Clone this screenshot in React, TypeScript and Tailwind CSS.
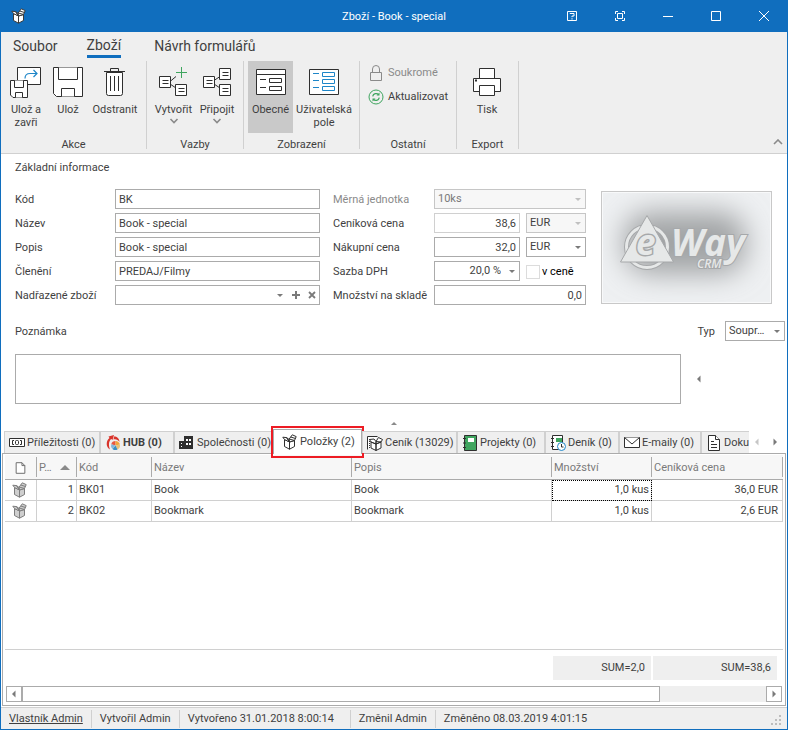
import { ReactNode, useState } from "react";
import clsx from "clsx";

const INK = "#2f2f2f";
const GREEN = "#3fa55f";
const BLUE = "#1e86c8";

/* ---------- icons ---------- */

interface BoxProps {
    stroke: string,
    fill: string,
    size?: number
}

function BoxIcon({stroke, fill, size = 16}: BoxProps) {
    return (
        <svg width={size} height={size} viewBox="0 0 16 16" fill={fill} stroke={stroke} strokeWidth="1" strokeLinejoin="round" className="shrink-0">
            <path d="M2.500 5.500 7.500 8v7.200l-5-2.700z"/>
            <path d="M12.500 6.500 7.500 8v7.200l5-2.700z"/>
            <path d="M2.500 5.500.8 3.200 4.600 3.600 7.500 8z"/>
            <path d="M4.600 3.600 7 5.400 7.500 8z"/>
            <path d="M7.200 5 10.300.8l3.900 1.800L12.500 6.500 7.500 8z"/>
            <path d="M7.200 5 12.500 6.500M8.700 3l4.800 1.500" fill="none"/>
        </svg>
    );
}

function SaveCloseIcon() {
    return (
        <svg width="32" height="32" viewBox="0 0 32 32" fill="#fff" stroke={INK}>
            <path d="M7.5 1.5h23v17h-23z"/>
            <path d="M15 12.5c0-3 2-5 5-5h7M23.5 4l3.5 3.5-3.5 3.5" fill="none" stroke={BLUE} strokeWidth="1.2"/>
            <path d="M.5 14.5h17v17H3l-2.5-2.5z"/>
            <path d="M4.5 14.5v7h9v-7M5.5 31.5v-5h7v5"/>
        </svg>
    );
}

function SaveIcon() {
    return (
        <svg width="32" height="32" viewBox="0 0 32 32" fill="#fff" stroke={INK}>
            <path d="M1.5 1.5h29v29h-26l-3-3z"/>
            <path d="M6.5 1.5v12h19v-12M9.5 30.5v-8h13v8"/>
        </svg>
    );
}

function TrashIcon() {
    return (
        <svg width="32" height="32" viewBox="0 0 32 32" fill="none" stroke={INK}>
            <path d="M7.5 6.5h16v21q0 2-2 2h-12q-2 0-2-2z" fill="#fff"/>
            <path d="M5 5.5h21M11.5 5V2.5h8V5M11.5 10v15M15.5 10v15M19.5 10v15"/>
        </svg>
    );
}

function Note({x, y}: { x: number, y: number }) {
    return <path d={`M${x} ${y}h11v11h-11zM${x + 3} ${y + 4}h6M${x + 3} ${y + 7}h6`}/>;
}

function CreateIcon() {
    return (
        <svg width="32" height="32" viewBox="0 0 32 32" fill="#fff" stroke={INK}>
            <path d="M12 15.5l6-5M12 18l6 4"/>
            <Note x={1.5} y={10.5}/>
            <Note x={17.5} y={18.5}/>
            <path d="M23.5 1v11M18 6.5h11" stroke={GREEN}/>
        </svg>
    );
}

function AttachIcon() {
    return (
        <svg width="32" height="32" viewBox="0 0 32 32" fill="#fff" stroke={INK}>
            <path d="M13 14.5l6-4M13 18l6 4"/>
            <Note x={2.5} y={10.5}/>
            <Note x={18.5} y={2.5}/>
            <Note x={18.5} y={18.5}/>
        </svg>
    );
}

function GeneralIcon() {
    return (
        <svg width="32" height="32" viewBox="0 0 32 32" fill="#fff" stroke={INK}>
            <path d="M1.5 3.5h29v25h-29zM1.5 8.5h29M5 13.5h6M5 21.5h6M14.5 12.5h12v4h-12zM14.5 20.5h12v4h-12z"/>
        </svg>
    );
}

function UserFieldsIcon() {
    return (
        <svg width="32" height="32" viewBox="0 0 32 32" fill="#fff" stroke={INK}>
            <path d="M1.5 3.5h29v25h-29z"/>
            <path d="M5 7.5h6M5 14.5h6M5 21.5h6M14.5 6.5h12v4h-12zM14.5 13.5h12v4h-12zM14.5 20.5h12v4h-12z" stroke={BLUE}/>
        </svg>
    );
}

function PrinterIcon() {
    return (
        <svg width="32" height="32" viewBox="0 0 32 32" fill="#fff" stroke={INK}>
            <path d="M8.5 12.5v-10h15v10"/>
            <path d="M2.5 12.5h27v13h-27z"/>
            <path d="M8.5 19.5h15v10h-15z"/>
            <path d="M4 14.5h2" strokeWidth="2"/>
        </svg>
    );
}

function LockIcon() {
    return (
        <svg width="16" height="18" viewBox="0 0 16 18" fill="none" stroke="#8a8a8a">
            <path d="M2.5 8.5h11v8h-11zM4.500 8.500V5a3.500 3.500 0 0 1 7 0v3.500"/>
        </svg>
    );
}

function RefreshIcon() {
    return (
        <svg width="16" height="16" viewBox="0 0 16 16" fill="none" stroke={GREEN}>
            <circle cx="8" cy="8" r="7"/>
            <path d="M4.700 7.300a3.500 3.500 0 0 1 6-1.600M11.300 8.700a3.500 3.500 0 0 1-6 1.600" strokeWidth="1.3"/>
            <path d="M11.500 3.500v3H8.500zM4.500 12.500v-3h3z" fill={GREEN} stroke="none"/>
        </svg>
    );
}

function Chevron({up = false}: { up?: boolean }) {
    return (
        <svg width="10" height="6" viewBox="0 0 10 6" fill="none" stroke="#8a8a8a" strokeWidth="1.6">
            <path d={up ? "M1 5l4-4 4 4" : "M1.500 1l3.500 3.500L8.500 1"}/>
        </svg>
    );
}

function Triangle({dir, className}: { dir: "up" | "down" | "left" | "right", className?: string }) {
    const shapes = {
        up: "M1 6h6L4 3z",
        down: "M1 3h6L4 6z",
        left: "M5.500 0.500v7L2 4z",
        right: "M2.500 0.500v7L6 4z"
    };
    return (
        <svg width="8" height="8" viewBox="0 0 8 8" fill="currentColor" className={clsx("shrink-0", className)}>
            <path d={shapes[dir]}/>
        </svg>
    );
}

function OpportunityIcon() {
    return (
        <svg width="16" height="16" viewBox="0 0 16 16" fill="#fff" stroke={INK} className="shrink-0">
            <path d="M.5 3.500h15v8H.5z"/>
            <path d="M5 5.500H3.500v4H5M11 5.500h1.500v4H11" fill="none"/>
            <rect x="6.500" y="5.500" width="3" height="4" rx="1"/>
        </svg>
    );
}

function HubIcon() {
    return (
        <svg width="16" height="16" viewBox="0 0 16 16" fill="none" className="shrink-0">
            <path d="M5 14.500C1 12.500.5 6 4.500 3l-1-1.500L9 0 7.500 5 6.300 4C3.500 6 3.500 10.500 5 14.500z" fill="#d9342b"/>
            <path d="M9 1.500c3 0 5.500 2 5.500 5.500C13 4.800 11 4 8.500 4.500z" fill="#d9342b"/>
            <path d="M10.500 10.500V6a4.500 4.500 0 0 0-4.300 3.200z" fill="#e9573f"/>
            <path d="M10.500 10.500V6a4.500 4.500 0 0 1 4.400 3.500z" fill="#f0a63c"/>
            <path d="M10.500 10.500l4.400-1a4.500 4.500 0 0 1-2.400 5z" fill="#e8c27a"/>
            <path d="M10.500 10.500l2 4a4.500 4.500 0 0 1-5 -.6z" fill="#3b8fc4"/>
            <path d="M10.500 10.500l-3 3.400a4.500 4.500 0 0 1-1.300-4.700z" fill="#86b6d9"/>
        </svg>
    );
}

function CompanyIcon() {
    return (
        <svg width="16" height="16" viewBox="0 0 16 16" className="shrink-0">
            <path d="M0 6h5v8H0zM5 1h9v13H5z" fill={INK}/>
            <path d="M7 4h2v2H7zM10 4h2v2h-2zM7 8h2v2H7zM10 8h2v2h-2zM2 8h1v1H2zM2 11h1v1H2z" fill="#fff"/>
        </svg>
    );
}

function PricelistIcon() {
    return (
        <svg width="16" height="16" viewBox="0 0 16 16" fill="#fff" stroke={INK} className="shrink-0">
            <path d="M.5 14.500v-13h10"/>
            <path d="M2.500 4v9.500" strokeDasharray="1 1"/>
            <path d="M4 7l5 2v6.500l-5-2.500zM14 7l-5 2v6.500l5-2.500zM4 7 2.500 4.500 7 4l2 2.500V9zM9 6.500 11.500 2.500l4 2L14 7 9 9zM9 6.500l5 .5"/>
        </svg>
    );
}

function ProjectIcon() {
    return (
        <svg width="16" height="16" viewBox="0 0 16 16" className="shrink-0">
            <path d="M2.500.500h12v15h-12z" fill={GREEN} stroke={INK}/>
            <path d="M6 3h6v4H6z" fill="#fff"/>
            <path d="M1 3.500h3M1 8h3M1 12.500h3" stroke={INK}/>
        </svg>
    );
}

function JournalIcon() {
    return (
        <svg width="16" height="16" viewBox="0 0 16 16" className="shrink-0">
            <path d="M2.500.500h10v14h-10z" fill="#fff" stroke={INK}/>
            <path d="M6 3h6v4H6z" fill={GREEN}/>
            <path d="M1 3.500h3M1 7.500h3M1 11.500h3" stroke={INK}/>
            <circle cx="11.500" cy="11.500" r="4" fill="#fff" stroke={BLUE}/>
            <path d="M11.500 9v3h2" fill="none" stroke={INK}/>
        </svg>
    );
}

function MailIcon() {
    return (
        <svg width="16" height="16" viewBox="0 0 16 16" fill="#fff" stroke={INK} className="shrink-0">
            <path d="M.5 2.500h15v10H.5z"/>
            <path d="M.5 2.500 8 9l7.500-6.500"/>
        </svg>
    );
}

function DocumentIcon() {
    return (
        <svg width="16" height="16" viewBox="0 0 16 16" fill="#fff" stroke={INK} className="shrink-0">
            <path d="M2.500.500h7l4 4v11h-11z"/>
            <path d="M9.500.500v4h4M5 6.500h3M5 9.500h6M5 12.500h6"/>
        </svg>
    );
}

function Logo() {
    return (
        <svg viewBox="0 0 169 111" className="h-full w-full" role="img" aria-label="eWay CRM">
            <defs>
                <filter id="soft" x="-50%" y="-50%" width="200%" height="200%">
                    <feGaussianBlur stdDeviation="14"/>
                </filter>
            </defs>
            <rect width="169" height="111" fill="#eef0f2"/>
            <rect x="22" y="20" width="122" height="62" rx="26" fill="#a2a4a6" filter="url(#soft)"/>
            <path d="M.5.500h168v110H.5z" fill="none" stroke="#f8f9fa"/>
            <circle cx="45" cy="55" r="20.500" fill="none" stroke="#a6a8aa" strokeWidth="5"/>
            <circle cx="45" cy="55" r="20.500" fill="none" stroke="#e6e8e8" strokeWidth="3"/>
            <path d="M45 23.500L71.500 70h-53z" fill="#e6e8e8" stroke="#a6a8aa" strokeLinejoin="round"/>
            <g fontStyle="italic" fill="#e6e8e8" stroke="#a6a8aa" strokeWidth="2" paintOrder="stroke" fontFamily="'Open Sans', sans-serif">
                <text x="34" y="63" fontSize="35" fontWeight="700" strokeWidth="3">e</text>
                <text x="69" y="64" fontSize="37" fontWeight="700">Way</text>
                <text x="95" y="76" fontSize="12" fontWeight="600">CRM</text>
            </g>
        </svg>
    );
}

/* ---------- title bar and ribbon ---------- */

function TitleBar() {
    const buttons = [
        {label: "Nápověda", d: "M3.500 3.500h9v9h-9zM6 6V5.500h4v2.500H8v1.200M8 10.200v1.300"},
        {label: "Celá obrazovka", d: "M3.500 6V3.500H6M10 3.500h2.500V6M12.500 10v2.500H10M6 12.500H3.500V10M5.500 5.500h5v5h-5z"},
        {label: "Minimalizovat", d: "M3 8.500h10"},
        {label: "Maximalizovat", d: "M3.500 3.500h9v9h-9z"},
        {label: "Zavřít", d: "M3 3l10 10M13 3L3 13"}
    ];

    return (
        <header className="relative flex h-8 items-center justify-between bg-[#106ebe] text-white">
            <div className="pl-2.5">
                <BoxIcon stroke="#3a3a3a" fill="#fff"/>
            </div>
            <h1 className="pointer-events-none absolute inset-x-0 pt-0.5 text-center">Zboží - Book - special</h1>
            <div className="-mr-px flex">
                {buttons.map((b) => (
                    <button key={b.label} type="button" aria-label={b.label} className="flex h-8 w-12 items-center justify-center">
                        <svg width="16" height="16" viewBox="0 0 16 16" fill="none" stroke="#fff">
                            <path d={b.d}/>
                        </svg>
                    </button>
                ))}
            </div>
        </header>
    );
}

interface RibbonButtonProps {
    icon: ReactNode,
    label: string,
    width: string,
    active?: boolean,
    menu?: boolean
}

function RibbonButton({icon, label, width, active, menu}: RibbonButtonProps) {
    return (
        <button type="button" className={clsx("flex h-[72px] flex-col items-center pt-[5px]", width, active && "bg-[#c9c9c9]")}>
            {icon}
            <span className="mt-[5px] leading-[13px]">{label}</span>
            {menu && <span className="mt-0.5 leading-[13px]"><Chevron/></span>}
        </button>
    );
}

function RibbonGroup({title, width, children}: { title: string, width: string, children: ReactNode }) {
    return (
        <section className={clsx("flex h-[88px] flex-col justify-between border-r border-[#d0d0d0]", width)}>
            <div className="flex pl-1">{children}</div>
            <h2 className="text-center leading-[8px]">{title}</h2>
        </section>
    );
}

function Ribbon() {
    return (
        <div className="relative border-b border-[#d0d0d0] bg-[#efefef]">
            <nav className="flex h-[29px] items-start gap-[29px] pl-3 pt-1 text-sm">
                <button type="button">Soubor</button>
                <button type="button" className="border-b-3 border-[#106ebe] leading-[19px]">Zboží</button>
                <button type="button" className="ml-1">Návrh formulářů</button>
            </nav>
            <div className="flex h-[92px]">
                <RibbonGroup title="Akce" width="w-[146px]">
                    <RibbonButton icon={<SaveCloseIcon/>} label="Ulož a zavři" width="w-[42px]"/>
                    <RibbonButton icon={<SaveIcon/>} label="Ulož" width="w-[42px]"/>
                    <RibbonButton icon={<TrashIcon/>} label="Odstranit" width="w-[52px]"/>
                </RibbonGroup>
                <RibbonGroup title="Vazby" width="w-[97px]">
                    <RibbonButton icon={<CreateIcon/>} label="Vytvořit" width="w-[45px]" menu/>
                    <RibbonButton icon={<AttachIcon/>} label="Připojit" width="w-[42px]" menu/>
                </RibbonGroup>
                <RibbonGroup title="Zobrazení" width="w-[116px]">
                    <RibbonButton icon={<GeneralIcon/>} label="Obecné" width="w-[45px]" active/>
                    <RibbonButton icon={<UserFieldsIcon/>} label="Uživatelská pole" width="w-[62px]"/>
                </RibbonGroup>
                <RibbonGroup title="Ostatní" width="w-[97px]">
                    <div className="flex flex-col pl-1">
                        <button type="button" disabled className="flex h-6 items-center gap-1 text-[#8a8a8a]">
                            <LockIcon/>Soukromé
                        </button>
                        <button type="button" className="flex h-6 items-center gap-1">
                            <RefreshIcon/>Aktualizovat
                        </button>
                    </div>
                </RibbonGroup>
                <RibbonGroup title="Export" width="w-[62px]">
                    <RibbonButton icon={<PrinterIcon/>} label="Tisk" width="w-[52px]"/>
                </RibbonGroup>
            </div>
            <button type="button" aria-label="Sbalit pás karet" className="absolute bottom-2 right-1">
                <Chevron up/>
            </button>
        </div>
    );
}

/* ---------- form ---------- */

const field = "h-5 border border-[#ababab] bg-white px-[3px] outline-none";

function TextField({id, label, value}: { id: string, label: string, value: string }) {
    return (
        <>
            <label htmlFor={id}>{label}</label>
            <input id={id} defaultValue={value} className={clsx(field, "w-full")}/>
        </>
    );
}

interface SelectFieldProps {
    id: string,
    value: string,
    width: string,
    label?: string,
    disabled?: boolean,
    alignRight?: boolean
}

function SelectField({id, value, width, label, disabled, alignRight}: SelectFieldProps) {
    return (
        <div className={clsx("relative", width)}>
            <select
                id={id}
                aria-label={label}
                disabled={disabled}
                className={clsx(
                    field,
                    "w-full appearance-none opacity-100 disabled:border-[#c6c6c6] disabled:bg-[#f7f7f7]",
                    alignRight && "pr-[18px] text-right"
                )}>
                <option>{value}</option>
            </select>
            <Triangle dir="down" className={clsx("pointer-events-none absolute right-1 top-1.5", disabled ? "text-[#c0c0c0]" : "text-[#7a7a7a]")}/>
        </div>
    );
}

function ProductForm() {
    return (
        <form className="pl-3.5 pr-0.5 pt-[7px] [&_label]:pt-0.5">
            <h2 className="leading-[14px]">Základní informace</h2>
            <div className="mt-3.5 flex pr-[13px]">
                <div className="grid flex-1 grid-cols-[100px_minmax(0,1fr)] items-center gap-y-1">
                    <TextField id="kod" label="Kód" value="BK"/>
                    <TextField id="nazev" label="Název" value="Book - special"/>
                    <TextField id="popis" label="Popis" value="Book - special"/>
                    <TextField id="cleneni" label="Členění" value="PREDAJ/Filmy"/>
                    <label htmlFor="nadrazene">Nadřazené zboží</label>
                    <div className={clsx(field, "flex items-center text-[#7a7a7a]")}>
                        <input id="nadrazene" className="min-w-0 flex-1 outline-none"/>
                        <button type="button" aria-label="Vybrat" className="w-4"><Triangle dir="down"/></button>
                        <button type="button" aria-label="Přidat" className="w-4">
                            <svg width="8" height="8" viewBox="0 0 8 8" stroke="currentColor" strokeWidth="2"><path d="M4 0v8M0 4h8"/></svg>
                        </button>
                        <button type="button" aria-label="Smazat" className="w-2">
                            <svg width="8" height="8" viewBox="0 0 8 8" stroke="currentColor" strokeWidth="1.8"><path d="M1 1l6 6M7 1L1 7"/></svg>
                        </button>
                    </div>
                </div>
                <div className="ml-[13px] grid w-[253px] grid-cols-[101px_86px_60px] items-center gap-y-1">
                    <label htmlFor="jednotka" className="text-[#8a8a8a]">Měrná jednotka</label>
                    <div className="col-span-2 w-[152px] text-[#7a7a7a]">
                        <SelectField id="jednotka" value="10ks" width="w-full" disabled/>
                    </div>

                    <label htmlFor="cenikova">Ceníková cena</label>
                    <input id="cenikova" disabled defaultValue="38,6" className={clsx(field, "w-full border-[#d0d0d0] bg-[#f7f7f7] text-right")}/>
                    <div className="pl-1.5">
                        <SelectField id="mena1" label="Měna ceníkové ceny" value="EUR" width="w-[60px]" disabled/>
                    </div>

                    <label htmlFor="nakupni">Nákupní cena</label>
                    <input id="nakupni" defaultValue="32,0" className={clsx(field, "w-full text-right")}/>
                    <div className="pl-1.5">
                        <SelectField id="mena2" label="Měna nákupní ceny" value="EUR" width="w-[60px]"/>
                    </div>

                    <label htmlFor="dph">Sazba DPH</label>
                    <SelectField id="dph" value="20,0 %" width="w-full" alignRight/>
                    <label className="flex items-center gap-0.5 whitespace-nowrap pl-1.5 text-black">
                        <input type="checkbox" className="size-3.5 appearance-none border border-[#dcdcdc] bg-white"/>
                        v ceně
                    </label>

                    <label htmlFor="sklad" className="whitespace-nowrap">Množství na skladě</label>
                    <input id="sklad" defaultValue="0,0" className={clsx(field, "col-span-2 w-[152px] text-right")}/>
                </div>
                <div className="ml-[15px] h-[113px] w-[171px] self-center border border-[#c8c8c8]">
                    <Logo/>
                </div>
            </div>
            <div className="mt-4 flex items-center justify-between">
                <label htmlFor="poznamka">Poznámka</label>
                <div className="flex items-center gap-2.5">
                    <label htmlFor="typ">Typ</label>
                    <SelectField id="typ" value="Soupr…" width="w-[60px]"/>
                </div>
            </div>
            <div className="mt-[13px] flex items-center">
                <textarea id="poznamka" className="h-[50px] flex-1 resize-none border border-[#ababab] px-[3px] outline-none"/>
                <button type="button" aria-label="Zobrazit panel" className="w-[104px] pl-3.5 text-[#7a7a7a]">
                    <Triangle dir="left"/>
                </button>
            </div>
        </form>
    );
}

/* ---------- tabs and item list ---------- */

const tabs = [
    {label: "Příležitosti (0)", icon: <OpportunityIcon/>, width: "w-24"},
    {label: "HUB (0)", icon: <HubIcon/>, width: "w-[74px]", bold: true},
    {label: "Společnosti (0)", icon: <CompanyIcon/>, width: "w-[99px]"},
    {label: "Položky (2)", icon: <BoxIcon stroke="#2f2f2f" fill="#fff"/>, width: "w-[89px]"},
    {label: "Ceník (13029)", icon: <PricelistIcon/>, width: "w-[95px]"},
    {label: "Projekty (0)", icon: <ProjectIcon/>, width: "w-[88px]"},
    {label: "Deník (0)", icon: <JournalIcon/>, width: "w-[74px]"},
    {label: "E-maily (0)", icon: <MailIcon/>, width: "w-[82px]"},
    {label: "Doku", icon: <DocumentIcon/>, width: "w-[100px]"}
];

function DetailTabs() {
    const [active, setActive] = useState(3);

    return (
        <div className="relative z-10 -mb-px flex h-[25px] pl-[3px]">
            <div role="tablist" className="-mt-1 flex min-w-0 flex-1 items-end overflow-x-clip">
                {tabs.map((tab, i) => (
                    <button
                        key={tab.label}
                        type="button"
                        role="tab"
                        aria-selected={i === active}
                        onClick={() => setActive(i)}
                        className={clsx(
                            "relative flex shrink-0 items-center gap-0.5 whitespace-nowrap border-x border-t",
                            tab.width,
                            tab.bold && "font-bold",
                            i === active ? "h-[25px] border-[#ababab] bg-white pl-2" : "mb-px h-[22px] border-[#d0d0d0] bg-[#efefef] pl-1"
                        )}>
                        {tab.icon}
                        {tab.label}
                        {i === active && <span className="pointer-events-none absolute -bottom-1 -left-[3px] -right-[3px] -top-1 border-2 border-[#ed1c24]"/>}
                    </button>
                ))}
            </div>
            <div className="flex w-[38px] items-center justify-between pl-1 pr-2 text-[#7a7a7a]">
                <button type="button" aria-label="Předchozí karty" className="text-[#c6c6c6]"><Triangle dir="left"/></button>
                <button type="button" aria-label="Další karty"><Triangle dir="right"/></button>
            </div>
        </div>
    );
}

interface Item {
    position: number,
    code: string,
    name: string,
    description: string,
    amount: string,
    price: string
}

const items: Item[] = [
    {position: 1, code: "BK01", name: "Book", description: "Book", amount: "1,0 kus", price: "36,0 EUR"},
    {position: 2, code: "BK02", name: "Bookmark", description: "Bookmark", amount: "1,0 kus", price: "2,6 EUR"}
];

function HeadCell({children}: { children: ReactNode }) {
    return (
        <th className="p-0 text-left font-normal">
            <div className="flex h-5 items-center border-r border-[#ababab] px-0.5 pt-0.5">{children}</div>
        </th>
    );
}

function ItemTable() {
    const cell = "border-b border-r border-[#d0d0d0] px-0.5 py-0";

    return (
        <table className="w-full table-fixed border-separate border-spacing-0">
            <colgroup>
                <col className="w-8"/>
                <col className="w-10"/>
                <col className="w-[75px]"/>
                <col className="w-[200px]"/>
                <col className="w-[200px]"/>
                <col className="w-[100px]"/>
                <col/>
            </colgroup>
            <thead className="bg-[#f7f7f7] text-[#7a7a7a]">
                <tr className="h-[25px] [&>th]:border-b [&>th]:border-[#ababab]">
                    <HeadCell>
                        <svg width="28" height="14" viewBox="0 0 28 14" fill="#fff" stroke="#6a6a6a" role="img" aria-label="Typ záznamu">
                            <path d="M9.500 1.500h6l3 3v8h-9zM15.500 1.500v3h3"/>
                        </svg>
                    </HeadCell>
                    <HeadCell>
                        <span className="flex-1">P…</span>
                        <svg width="10" height="6" viewBox="0 0 10 6" fill="#8a8a8a"><path d="M0 5h10L5 0z"/></svg>
                        <span className="w-1"/>
                    </HeadCell>
                    <HeadCell>Kód</HeadCell>
                    <HeadCell>Název</HeadCell>
                    <HeadCell>Popis</HeadCell>
                    <HeadCell>Množství</HeadCell>
                    <HeadCell>Ceníková cena</HeadCell>
                </tr>
            </thead>
            <tbody>
                {items.map((item, i) => (
                    <tr key={item.code} className="h-[21px]">
                        <td className={clsx(cell, "pl-[7px]")}><BoxIcon stroke="#7d7d7d" fill="#cfcfcf"/></td>
                        <td className={clsx(cell, "text-right")}>{item.position}</td>
                        <td className={cell}>{item.code}</td>
                        <td className={cell}>{item.name}</td>
                        <td className={cell}>{item.description}</td>
                        <td className={clsx(cell, "text-right", i === 0 && "outline-1 -outline-offset-1 outline-dotted outline-black")}>{item.amount}</td>
                        <td className={clsx(cell, "pr-1 text-right")}>{item.price}</td>
                    </tr>
                ))}
            </tbody>
        </table>
    );
}

function ItemGrid() {
    return (
        <div className="mx-px flex flex-1 flex-col border border-[#ababab] px-0.5 pt-px">
            <ItemTable/>
            <div className="min-h-8 flex-1"/>
            <div className="flex justify-end gap-0.5 border-t border-[#d0d0d0] py-1.5 pr-1.5">
                <div className="flex h-6 w-[98px] items-center justify-end bg-[#efefef] pr-1.5">SUM=2,0</div>
                <div className="flex h-6 w-[124px] items-center justify-end bg-[#efefef] pr-1.5">SUM=38,6</div>
            </div>
            <div className="mx-px mb-[3px] flex h-4 bg-[#efefef] text-[#7a7a7a]">
                <button type="button" aria-label="Posunout vlevo" className="flex w-4 items-center justify-center border border-[#ababab] bg-white">
                    <Triangle dir="left"/>
                </button>
                <div className="flex-1">
                    <div className="h-4 w-6/7 border border-[#ababab] bg-white"/>
                </div>
                <button type="button" aria-label="Posunout vpravo" className="flex w-4 items-center justify-center border border-[#ababab] bg-white">
                    <Triangle dir="right"/>
                </button>
            </div>
        </div>
    );
}

function StatusBar() {
    const cell = "whitespace-nowrap border-r border-[#d0d0d0] px-2 leading-[18px]";

    return (
        <footer className="mt-px flex h-[22px] items-center justify-between border-t border-[#d0d0d0] bg-[#efefef]">
            <div className="flex">
                <div className={clsx(cell, "min-w-[87px]")}><a href="#vlastnik" className="underline">Vlastník Admin</a></div>
                <div className={clsx(cell, "min-w-[88px]")}>Vytvořil Admin</div>
                <div className={clsx(cell, "min-w-[171px]")}>Vytvořeno 31.01.2018 8:00:14</div>
                <div className={clsx(cell, "min-w-[84px]")}>Změnil Admin</div>
                <div className="px-2 leading-[18px]">Změněno 08.03.2019 4:01:15</div>
            </div>
            <svg width="12" height="12" viewBox="0 0 12 12" fill="#bdbdbd" className="mr-1 mt-1">
                <path d="M8 0h2v2H8zM4 4h2v2H4zM8 4h2v2H8zM0 8h2v2H0zM4 8h2v2H4zM8 8h2v2H8z"/>
            </svg>
        </footer>
    );
}

export default function App() {
    return (
        <div className="flex min-h-screen flex-col border-x border-b border-[#106ebe] bg-white font-['Roboto','Noto_Sans',sans-serif] text-[11px] leading-[14px] text-[#3f3f3f]">
            <TitleBar/>
            <Ribbon/>
            <ProductForm/>
            <button type="button" aria-label="Sbalit formulář" className="flex h-[25px] items-center justify-center pt-3 text-[#8a8a8a]">
                <Triangle dir="up"/>
            </button>
            <DetailTabs/>
            <ItemGrid/>
            <StatusBar/>
        </div>
    );
}
